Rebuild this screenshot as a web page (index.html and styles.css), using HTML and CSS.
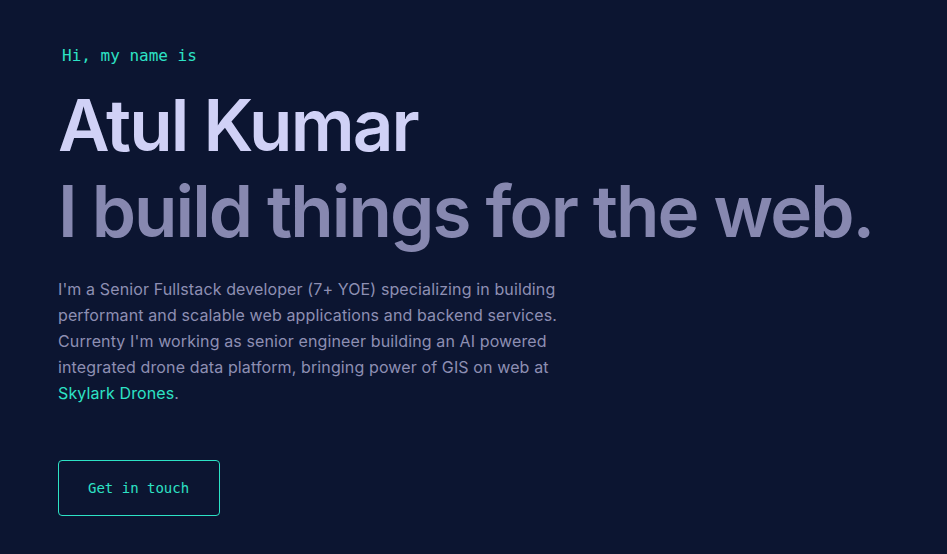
FILE: index.html
```html
<!DOCTYPE html>
<html lang="en">
<head>
<meta charset="utf-8">
<title>Atul Kumar</title>
<link rel="stylesheet" href="styles.css">
</head>
<body>
<main class="hero">
  <p class="hero-intro">Hi, my name is</p>
  <h1 class="hero-name">Atul Kumar</h1>
  <h2 class="hero-tagline">I build things for the web.</h2>
  <p class="hero-text">I'm a Senior Fullstack developer (7+ YOE) specializing in building performant and scalable web applications and backend services. Currenty I'm working as senior engineer building an AI powered integrated drone data platform, bringing power of GIS on web at <a class="hero-link" href="#">Skylark Drones</a>.</p>
  <a class="hero-button" href="#">Get in touch</a>
</main>
</body>
</html>
```

FILE: styles.css
```css
html, body {
  margin: 0;
  padding: 0;
  background: #0c1531;
}
body {
  font-family: Inter, "Noto Sans", sans-serif;
  width: 947px;
  height: 554px;
  overflow: hidden;
}
.hero {
  display: flex;
  flex-direction: column;
  align-items: flex-start;
  padding: 46px 0 0 58px;
}
.hero-intro {
  margin: 0 0 0 4px;
  font-family: "DejaVu Sans Mono", "Liberation Mono", monospace;
  font-size: 16px;
  line-height: 20px;
  color: #2de2c5;
}
.hero-name {
  margin: 16px 0 0;
  font-size: 71px;
  font-weight: 600;
  line-height: 86px;
  letter-spacing: -1.9px;
  color: #d0d1f6;
}
.hero-tagline {
  margin: 0;
  font-size: 71px;
  font-weight: 600;
  line-height: 86px;
  letter-spacing: -1.95px;
  color: #8788b0;
}
.hero-text {
  margin: 22px 0 0;
  max-width: 505px;
  font-size: 16px;
  line-height: 26px;
  letter-spacing: 0.12px;
  color: #8e8fb3;
}
.hero-link {
  color: #2de2c5;
  text-decoration: none;
}
.hero-button {
  margin-top: 54px;
  padding: 18px 30px 18px 29px;
  border: 1px solid #2de2c5;
  border-radius: 4px;
  font-family: "DejaVu Sans Mono", "Liberation Mono", monospace;
  font-size: 14px;
  line-height: 18px;
  color: #2de2c5;
  text-decoration: none;
}
```
